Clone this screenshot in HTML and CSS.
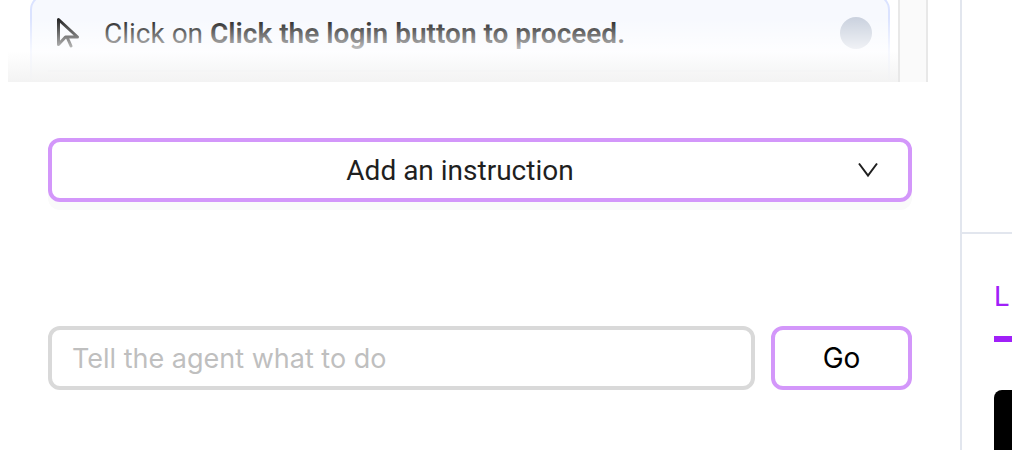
FILE: index.html
```html
<!DOCTYPE html>
<html lang="en">
<head>
<meta charset="utf-8">
<title>Agent instructions</title>
<link rel="stylesheet" href="styles.css">
</head>
<body>
<main class="editor">
  <section class="steps">
    <div class="steps-list">
      <article class="step">
        <div class="step-head">
          <svg class="step-icon" viewBox="0 0 24 32" aria-hidden="true"><path d="M2.500 2.500v25l7-7.500H21.500zM11 20l4 9"/></svg>
          <p class="step-text">Click on <strong>Click the login button to proceed.</strong></p>
          <span class="step-status"></span>
        </div>
      </article>
    </div>
    <div class="steps-rail"></div>
  </section>
  <div class="add-row">
    <button class="add-button" type="button">
      <span class="add-label">Add an instruction</span>
      <svg class="add-chevron" viewBox="0 0 20 16" aria-hidden="true"><path d="M1 1.500l9 12 9-12"/></svg>
    </button>
  </div>
  <form class="prompt">
    <input class="prompt-input" type="text" placeholder="Tell the agent what to do" aria-label="Tell the agent what to do">
    <button class="prompt-go" type="button">Go</button>
  </form>
</main>
<aside class="side">
  <div class="side-top"></div>
  <div class="side-body">
    <button class="side-tab" type="button">L</button>
    <div class="side-screen"></div>
  </div>
</aside>
</body>
</html>
```
FILE: styles.css
```css
* { box-sizing: border-box; }

body {
  margin: 0;
  min-height: 100vh;
  display: flex;
  overflow: hidden;
  background: #fff;
  color: #1f1f1f;
  font: 28px/36px Roboto, sans-serif;
}

button, input {
  font: inherit;
  color: inherit;
  margin: 0;
}

.editor {
  flex: 1;
  min-width: 0;
}

.steps {
  display: flex;
  height: 82px;
  margin: 0 32px 0 8px;
  overflow: hidden;
}

.steps-list {
  flex: 1;
  position: relative;
  padding: 0 8px 0 22px;
}

.steps-list::after {
  content: "";
  position: absolute;
  inset: 18px 0 0;
  background: linear-gradient(rgba(255, 255, 255, 0), rgba(255, 255, 255, 0.76) 52%, #f3f3f3);
}

.step {
  height: 112px;
  margin-top: -6px;
  padding: 0 16px;
  border: 2px solid #dbe3ff;
  border-radius: 16px;
  background: #f7f9fe;
}

.step-head {
  display: flex;
  align-items: center;
  height: 76px;
  padding-left: 8px;
  border-bottom: 2px solid #e2e6ee;
}

.step-icon {
  width: 24px;
  height: 32px;
  margin-right: 24px;
  fill: none;
  stroke: #1f1f1f;
  stroke-width: 3;
  stroke-linejoin: round;
  stroke-linecap: round;
}

.step-text {
  flex: 1;
  margin: 0;
  padding-top: 2px;
  white-space: nowrap;
}

.step-text strong { font-weight: 600; }

.step-status {
  width: 32px;
  height: 32px;
  border-radius: 50%;
  background: #cbd2df;
}

.steps-rail {
  width: 30px;
  border: solid #e8e8e8;
  border-width: 0 2px;
  background: #fafafa;
}

.add-row { padding: 56px 48px 0; }

.add-button {
  display: flex;
  align-items: center;
  width: 100%;
  height: 64px;
  padding: 0 30px 0 28px;
  border: 4px solid #d397fa;
  border-radius: 12px;
  background: #fff;
  box-shadow: 0 8px 0 #fafafa;
}

.add-label {
  flex: 1;
  padding-top: 2px;
}

.add-chevron {
  width: 20px;
  height: 16px;
  margin-left: 18px;
  fill: none;
  stroke: #1f1f1f;
  stroke-width: 2;
}

.prompt {
  display: flex;
  gap: 16px;
  padding: 124px 48px 0;
}

.prompt-input {
  flex: 1;
  min-width: 0;
  height: 64px;
  padding: 0 20px;
  border: 4px solid #d9d9d9;
  border-radius: 12px;
  background: #fff;
  font-family: Inter, sans-serif;
  font-size: 27px;
}

.prompt-input::placeholder {
  color: #bfbfbf;
  opacity: 1;
}

.prompt-go {
  width: 141px;
  height: 64px;
  padding: 0;
  border: 4px solid #d397fa;
  border-radius: 12px;
  background: #fff;
  color: #000;
  font-family: Inter, sans-serif;
}

.side {
  width: 52px;
  display: flex;
  flex-direction: column;
  border-left: 2px solid #e2e6ee;
}

.side-top {
  height: 234px;
  border-bottom: 2px solid #e2e6ee;
}

.side-body {
  flex: 1;
  display: flex;
  flex-direction: column;
  padding: 44px 0 0 32px;
}

.side-tab {
  height: 64px;
  padding: 0 0 20px;
  border: 0;
  border-bottom: 6px solid #a020f8;
  background: none;
  color: #a020f8;
  text-align: left;
}

.side-screen {
  flex: 1;
  margin-top: 48px;
  border-top-left-radius: 8px;
  background: #000;
}
```
